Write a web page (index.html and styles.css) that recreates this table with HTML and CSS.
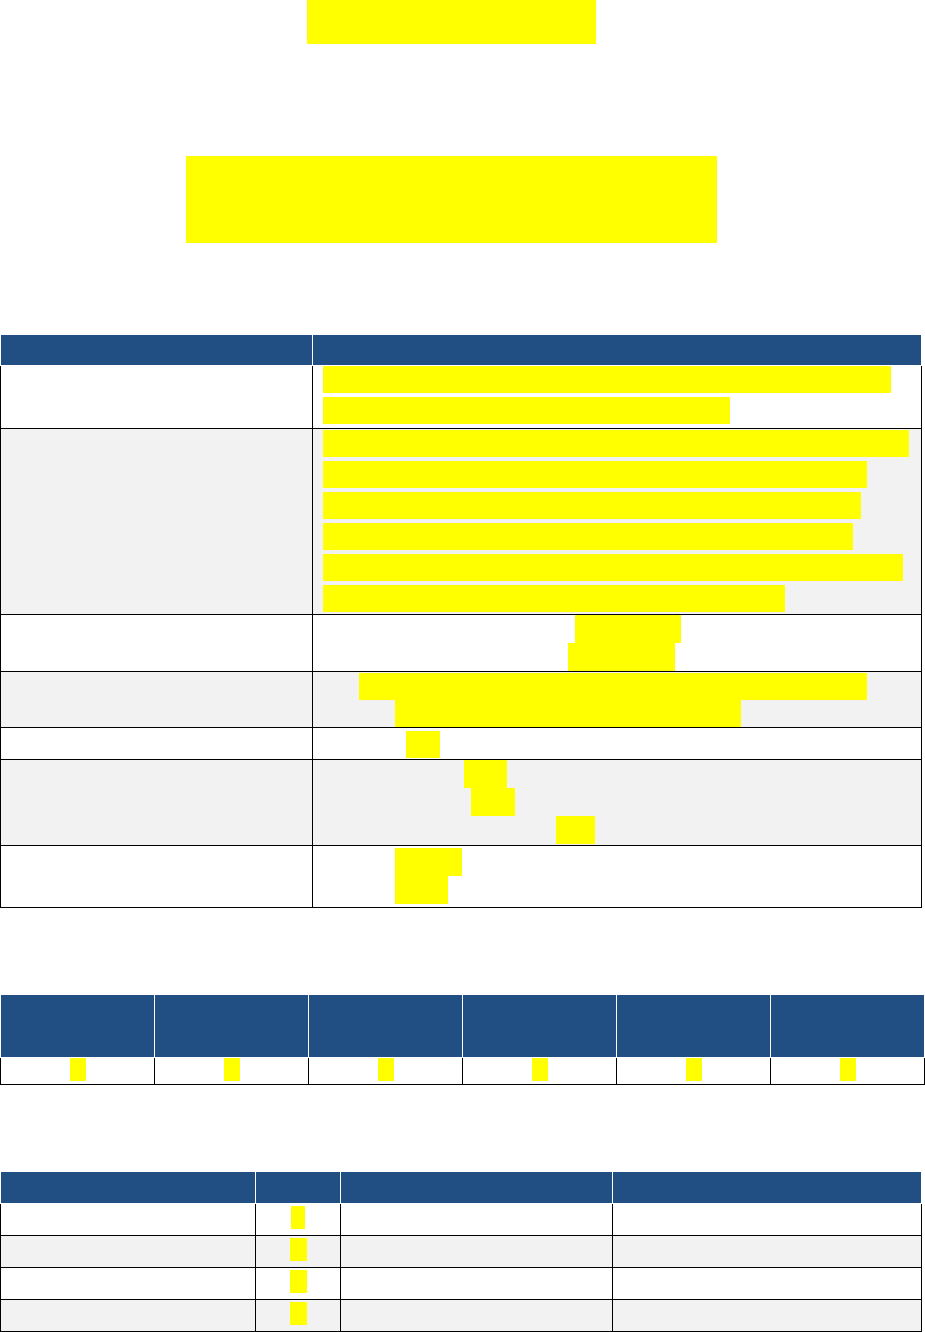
FILE: index.html
```html
<!DOCTYPE html>
<html lang="en">
<head>
<meta charset="utf-8">
<title>Project Status Report</title>
<link rel="stylesheet" href="styles.css">
</head>
<body>
<div class="title-wrap">
  <h1 class="title"><span class="hl">Status Report</span></h1>
</div>
<div class="banner">
  <span class="hl">Network Modernization Program<br>Phase II Summary</span>
</div>

<h2 class="gap g91">Project Details</h2>
<table class="t1">
  <thead>
    <tr><th class="c1">Item</th><th class="c2">Details</th></tr>
  </thead>
  <tbody>
    <tr class="r1">
      <td class="k"><div class="lbl">Overview</div></td>
      <td class="v">
        <div class="ln a"><span class="hl w568">The project replaces legacy switches and routers at all sites</span></div>
        <div class="ln a"><span class="hl w407">with a unified managed network platform.</span></div>
      </td>
    </tr>
    <tr class="r2 alt">
      <td class="k"><div class="lbl">Objectives</div></td>
      <td class="v">
        <div class="ln a"><span class="hl w586">Standardize hardware and firmware across every regional office</span></div>
        <div class="ln a"><span class="hl w544">Reduce unplanned outages by at least forty percent</span></div>
        <div class="ln a"><span class="hl w538">Introduce centralized monitoring and alerting tools</span></div>
        <div class="ln a"><span class="hl w530">Improve wireless coverage in warehouses and labs</span></div>
        <div class="ln a"><span class="hl w580">Document all configurations in the shared knowledge base</span></div>
        <div class="ln a last"><span class="hl w462">Train local staff on the new procedures</span></div>
      </td>
    </tr>
    <tr class="r3">
      <td class="k"><div class="lbl">Timeline</div></td>
      <td class="v">
        <div class="ln b"><span class="pre p252">Start date:</span><span class="hl w106">Mar 4, 2024</span></div>
        <div class="ln b"><span class="pre p245">End date:</span><span class="hl w107">Nov 29, 2024</span></div>
      </td>
    </tr>
    <tr class="r4 alt">
      <td class="k"><div class="lbl">Budget</div></td>
      <td class="v">
        <div class="ln c"><span class="pre p36">A:</span><span class="hl w508">Approved capital budget of 1.2 million for hardware</span></div>
        <div class="ln c"><span class="pre p72">B:</span><span class="hl w346">Reserve held for contingencies</span></div>
      </td>
    </tr>
    <tr class="r5">
      <td class="k"><div class="lbl">Owner</div></td>
      <td class="v">
        <div class="ln c"><span class="pre p83">Lead:</span><span class="hl w34">IT</span></div>
      </td>
    </tr>
    <tr class="r6 alt">
      <td class="k"><div class="lbl">Milestones</div></td>
      <td class="v">
        <div class="ln b"><span class="pre p141">Design:</span><span class="hl w43">Yes</span></div>
        <div class="ln b"><span class="pre p148">Build:</span><span class="hl w44">60%</span></div>
        <div class="ln b"><span class="pre p233">Acceptance testing:</span><span class="hl w39">Q3</span></div>
      </td>
    </tr>
    <tr class="r7">
      <td class="k"><div class="lbl">Status</div></td>
      <td class="v">
        <div class="ln b"><span class="pre p72">State:</span><span class="hl w67">Active</span></div>
        <div class="ln b"><span class="pre p72">Risk:</span><span class="hl w53">Low</span></div>
      </td>
    </tr>
  </tbody>
</table>

<h2 class="gap g86">Progress Metrics</h2>
<table class="t2">
  <thead>
    <tr>
      <th>Sites<br>Planned</th>
      <th>Sites<br>Completed</th>
      <th>Devices<br>Installed</th>
      <th>Open<br>Issues</th>
      <th>Change<br>Requests</th>
      <th>Team<br>Members</th>
    </tr>
  </thead>
  <tbody>
    <tr>
      <td><span class="hl">9</span></td>
      <td><span class="hl">7</span></td>
      <td><span class="hl">5</span></td>
      <td><span class="hl">3</span></td>
      <td><span class="hl">2</span></td>
      <td><span class="hl">8</span></td>
    </tr>
  </tbody>
</table>

<h2 class="gap g86">Team Allocation</h2>
<table class="t3">
  <thead>
    <tr><th class="c1">Role</th><th class="c2">Qty</th><th class="c3">Responsibility</th><th class="c4">Location</th></tr>
  </thead>
  <tbody>
    <tr>
      <td>Network Engineers</td><td class="n"><span class="hl n1">4</span></td><td>Design and build</td><td>Head office</td>
    </tr>
    <tr class="alt">
      <td>Field Technicians</td><td class="n"><span class="hl">6</span></td><td>Site installation</td><td>Regional sites</td>
    </tr>
    <tr>
      <td>Security Analysts</td><td class="n"><span class="hl">2</span></td><td>Policy review</td><td>Head office</td>
    </tr>
    <tr class="alt">
      <td>Project Managers</td><td class="n"><span class="hl">1</span></td><td>Coordination</td><td>Remote</td>
    </tr>
  </tbody>
</table>
</body>
</html>
```

FILE: styles.css
```css
html, body {
  margin: 0;
  padding: 0;
  background: #ffffff;
}

body {
  width: 925px;
  font-family: "Liberation Sans", Arial, sans-serif;
  font-size: 18px;
  color: transparent;
}

.hl {
  display: inline-block;
  vertical-align: top;
  background: #ffff00;
  color: transparent;
  overflow: hidden;
  white-space: nowrap;
}

.pre {
  display: inline-block;
  vertical-align: top;
  overflow: hidden;
  white-space: nowrap;
}

/* Title */
.title-wrap {
  width: 903px;
  text-align: center;
}

.title {
  margin: 0;
  height: 44px;
  font-size: 30px;
  line-height: 44px;
  font-weight: bold;
}

.title .hl {
  width: 289px;
  height: 44px;
}

.banner {
  width: 903px;
  margin-top: 112px;
  display: flex;
  justify-content: center;
}

.banner .hl {
  width: 531px;
  height: 87px;
  font-size: 28px;
  line-height: 43px;
  white-space: normal;
  text-align: center;
}

/* Section gaps (invisible headings) */
.gap {
  margin: 0;
  font-size: 20px;
  overflow: hidden;
}

.g91 { height: 91px; line-height: 91px; }
.g86 { height: 86px; line-height: 86px; }

/* Tables */
table {
  border-collapse: separate;
  border-spacing: 0;
  table-layout: fixed;
}

th {
  background: #214f84;
  color: transparent;
  padding: 0;
  border-top: 1px solid #ffffff;
  border-bottom: 1px solid #ffffff;
  border-right: 1px solid #ffffff;
  font-size: 18px;
  font-weight: bold;
  text-align: left;
  vertical-align: top;
  overflow: hidden;
  white-space: nowrap;
}

th:first-child {
  border-left: 1px solid #ffffff;
}

td {
  padding: 0;
  border-right: 1px solid #000000;
  border-bottom: 1px solid #000000;
  vertical-align: top;
  background: #ffffff;
}

td:first-child {
  border-left: 1px solid #000000;
}

tr.alt td {
  background: #f2f2f2;
}

/* Table 1 */
.t1 {
  width: 922px;
}

.t1 th {
  height: 30px;
  line-height: 30px;
  padding: 0 10px;
}

.t1 .c1 { width: 291px; }
.t1 .c2 { width: 588px; }

.t1 .k {
  padding: 0 10px;
}

.lbl {
  height: 24px;
  line-height: 24px;
  overflow: hidden;
  white-space: nowrap;
}

.t1 .v {
  padding: 0 10px;
}

.ln {
  display: block;
  white-space: nowrap;
  overflow: hidden;
  font-size: 18px;
}

.ln.a {
  height: 27px;
  line-height: 27px;
  margin-bottom: 4px;
}

.ln.a .hl { height: 27px; }

.ln.a.last { margin-bottom: 2px; }

.ln.b {
  height: 28px;
  line-height: 28px;
}

.ln.b .hl { height: 28px; }

.ln.c {
  height: 27px;
  line-height: 27px;
}

.ln.c .hl { height: 27px; }

.r2 .v { padding-top: 1px; }
.r4 .v { padding-top: 1px; }
.r5 .v { padding-top: 3px; padding-bottom: 1px; }
.r6 .v { padding-bottom: 1px; }
.r7 .v { padding-top: 2px; padding-bottom: 3px; }

/* mark widths */
.w34 { width: 34px; }
.w39 { width: 39px; }
.w43 { width: 43px; }
.w44 { width: 44px; }
.w53 { width: 53px; }
.w67 { width: 67px; }
.w106 { width: 106px; }
.w107 { width: 107px; }
.w346 { width: 346px; }
.w407 { width: 407px; }
.w462 { width: 462px; }
.w508 { width: 508px; }
.w530 { width: 530px; }
.w538 { width: 538px; }
.w544 { width: 544px; }
.w568 { width: 568px; }
.w580 { width: 580px; }
.w586 { width: 586px; }

/* leading text widths */
.p36 { width: 36px; }
.p72 { width: 72px; }
.p83 { width: 83px; }
.p141 { width: 141px; }
.p148 { width: 148px; }
.p233 { width: 233px; }
.p245 { width: 245px; }
.p252 { width: 252px; }

/* Table 2 */
.t2 {
  width: 925px;
}

.t2 th {
  width: 153px;
  height: 62px;
  line-height: 31px;
  text-align: center;
}

.t2 td {
  padding: 0 0 3px;
  line-height: 23px;
  text-align: center;
}

.t2 .hl {
  width: 16px;
  height: 23px;
}

/* Table 3 */
.t3 {
  width: 922px;
}

.t3 th {
  height: 31px;
  line-height: 31px;
  padding: 0 10px;
}

.t3 .c1 { width: 234px; }
.t3 .c2 { width: 64px; }
.t3 .c3 { width: 251px; }
.t3 .c4 { width: 288px; }

.t3 td {
  padding: 2px 10px 6px;
  line-height: 23px;
  height: 23px;
  white-space: nowrap;
  overflow: hidden;
}

.t3 td.n {
  text-align: center;
}

.t3 .hl {
  width: 17px;
  height: 23px;
}

.t3 .hl.n1 {
  width: 14px;
}
```
